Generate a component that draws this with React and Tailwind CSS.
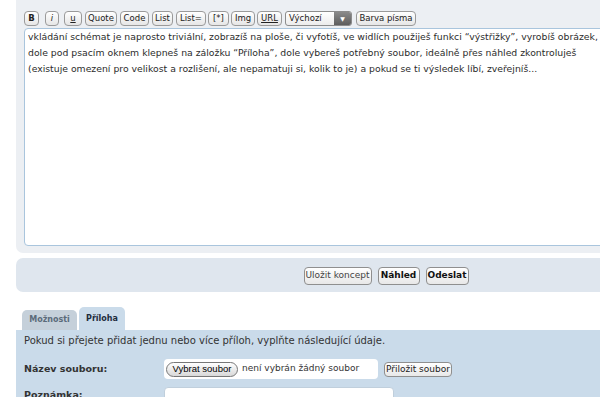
import React from "react";

const tools = [
  { label: "B", cls: "w-[15px] font-bold" },
  { label: "i", cls: "ml-[6px] w-[14px] italic" },
  { label: "u", cls: "ml-[5px] w-[18px] underline" },
  { label: "Quote", cls: "ml-[3px] w-[32px]" },
  { label: "Code", cls: "ml-[3px] w-[29px]" },
  { label: "List", cls: "ml-[3px] w-[21px]" },
  { label: "List=", cls: "ml-[3px] w-[30px]" },
  { label: "[*]", cls: "ml-[2px] w-[21px]" },
  { label: "Img", cls: "ml-[2px] w-[24px]" },
  { label: "URL", cls: "ml-[2px] w-[25px] underline" },
];

const lines = [
  "vkládání schémat je naprosto triviální, zobrazíš na ploše, či vyfotíš, ve widlích použiješ funkci “výstřižky”, vyrobíš obrázek,",
  "dole pod psacím oknem klepneš na záložku “Příloha”, dole vybereš potřebný soubor, ideálně přes náhled zkontroluješ",
  "(existuje omezení pro velikost a rozlišení, ale nepamatuji si, kolik to je) a pokud se ti výsledek líbí, zveřejníš...",
];

function ToolButton({ label, cls }) {
  return (
    <button
      className={
        "h-[15px] shrink-0 rounded-[4px] border border-[#9a9a9a] bg-gradient-to-b from-white to-[#e6e6e6] text-[8.5px] leading-[13px] text-[#222] " +
        cls
      }
    >
      {label}
    </button>
  );
}

export default function App() {
  return (
    <div className="h-[397px] w-[600px] overflow-hidden bg-white font-['DejaVu_Sans',sans-serif] text-[#333]">
      <div className="w-[772px] px-4">
        {/* editor panel */}
        <div className="rounded-b-[7px] bg-[#eceff3] px-2 pb-[7px] pt-[11px]">
          <div className="flex h-[15px] items-center">
            {tools.map((t) => (
              <ToolButton key={t.label} label={t.label} cls={t.cls} />
            ))}
            <div className="ml-[3px] flex h-[15px] w-[67px] shrink-0 overflow-hidden rounded-[3px] border border-[#8c8c8c] bg-gradient-to-b from-white to-[#ececec]">
              <span className="flex-1 pl-[3px] text-[8.5px] leading-[13px] text-[#222]">Výchozí</span>
              <span className="flex w-[17px] items-center justify-center bg-gradient-to-b from-[#8a8a8a] to-[#5e5e5e] text-[6px] text-white">
                ▼
              </span>
            </div>
            <ToolButton label="Barva písma" cls="ml-[4px] w-[60px]" />
          </div>
          <div className="mt-[2px] h-[218px] rounded-[4px] border border-[#a9c5dd] bg-white pl-[3px] text-[9.3px] leading-[16px] text-[#2b2b2b]">
            {lines.map((l) => (
              <div key={l} className="whitespace-nowrap">
                {l}
              </div>
            ))}
          </div>
        </div>

        {/* submit bar */}
        <div className="mt-[5px] flex h-[34px] items-center justify-center gap-[6px] rounded-[7px] bg-[#dfe6ee] pt-[2px]">
          <button className="h-[18px] w-[68px] rounded-[4px] border border-[#8f8f8f] bg-gradient-to-b from-white to-[#e8e8e8] text-[9px] text-[#444]">
            Uložit koncept
          </button>
          <button className="h-[18px] w-[42px] rounded-[4px] border border-[#8f8f8f] bg-gradient-to-b from-white to-[#e8e8e8] text-[9px] font-bold text-[#111]">
            Náhled
          </button>
          <button className="h-[18px] w-[43px] rounded-[4px] border border-[#8f8f8f] bg-gradient-to-b from-white to-[#e8e8e8] text-[9px] font-bold text-[#111]">
            Odeslat
          </button>
        </div>

        {/* tabs */}
        <div className="mt-[15px] flex items-end gap-[2px] pl-[6px]">
          <div className="flex h-[20px] w-[55px] items-center justify-center rounded-t-[5px] bg-[#c5d0da] text-[8px] font-bold text-[#5b6b7a]">
            Možnosti
          </div>
          <div className="flex h-[23px] w-[46px] items-center justify-center rounded-t-[5px] bg-[#cadbea] text-[8px] font-bold text-[#1e2d3d]">
            Příloha
          </div>
        </div>
        <div className="h-[80px] rounded-tr-[7px] bg-[#cadbea] px-2 pt-[4px]">
          <p className="text-[10px] leading-[14px] text-[#333]">
            Pokud si přejete přidat jednu nebo více příloh, vyplňte následující údaje.
          </p>
          <div className="mt-[11px] flex items-center">
            <span className="w-[140px] text-[9.5px] font-bold text-[#333]">Název souboru:</span>
            <div className="flex h-[20px] w-[214px] items-center rounded-[4px] bg-white pl-[2px]">
              <span className="flex h-[15px] w-[72px] items-center justify-center rounded-full border border-[#777] bg-gradient-to-b from-white to-[#d8d8d8] font-['Liberation_Sans',sans-serif] text-[9.5px] text-black">
                Vybrat soubor
              </span>
              <span className="ml-[4px] text-[9px] text-[#333]">není vybrán žádný soubor</span>
            </div>
            <button className="ml-[6px] h-[15px] w-[68px] rounded-[4px] border border-[#8f8f8f] bg-gradient-to-b from-white to-[#e8e8e8] text-[9px] leading-[13px] text-[#222]">
              Přiložit soubor
            </button>
          </div>
          <div className="mt-[8px] flex items-start">
            <span className="w-[140px] pt-[1px] text-[9.5px] font-bold text-[#333]">Poznámka:</span>
            <div className="h-[30px] w-[230px] rounded-[4px] border border-[#c0cfdc] bg-white" />
          </div>
        </div>
      </div>
    </div>
  );
}
